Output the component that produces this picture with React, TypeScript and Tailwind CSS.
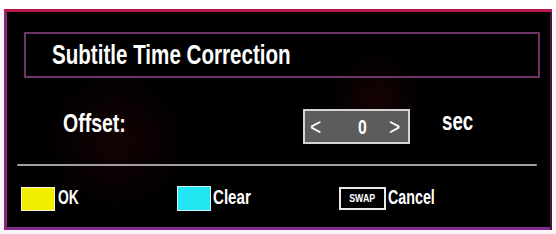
import React from "react";

const F = { fontFamily: '"Liberation Sans", Arial, sans-serif' };

function T({ children, cls }: { children: React.ReactNode; cls: string }) {
  return (
    <span className={`inline-block whitespace-nowrap font-bold text-white origin-left leading-none ${cls}`} style={F}>
      {children}
    </span>
  );
}

export default function App() {
  return (
    <div className="w-[556px] h-[234px] bg-[#fbf4fb] overflow-hidden" style={F}>
      <div className="h-[9px] bg-white" />
      <div className="ml-[4px] w-[548px] h-[221px] flex flex-col pt-[3px] pl-[3px] pr-[2px] pb-[3px] bg-black shadow-[inset_0_3px_0_#b81a4e,inset_3px_0_0_#86286e,inset_-2px_0_0_#4a1240,inset_0_-3px_0_#7d2c8c]">
        <div className="flex-1 flex flex-col bg-[radial-gradient(circle_at_20%_60%,#140204_0%,transparent_16%),radial-gradient(circle_at_68%_40%,#160204_0%,transparent_12%)]">
          <div className="mt-[20px] ml-[17px] w-[516px] h-[46px] border-2 border-[#6e3466] flex items-center pl-[26px]">
            <T cls="text-[28px] scale-x-[0.735]">Subtitle Time Correction</T>
          </div>
          <div className="mt-[31px] h-[35px] flex items-center">
            <div className="w-[296px] pl-[56px]">
              <T cls="text-[25px] scale-x-[0.78] translate-y-[-2px]">Offset:</T>
            </div>
            <div className="w-[107px] h-[35px] border-2 border-[#d4d4d4] bg-[#5c5c5c] flex items-center justify-between px-[5px]">
              <T cls="text-[24px] font-normal scale-x-[0.8]">&lt;</T>
              <T cls="text-[21px] scale-x-[0.75] ml-[14px]">0</T>
              <T cls="text-[24px] font-normal scale-x-[0.8]">&gt;</T>
            </div>
            <div className="ml-[32px]">
              <T cls="text-[26px] scale-x-[0.72] translate-y-[-4px]">sec</T>
            </div>
          </div>
          <div className="mt-[20px] ml-[10px] w-[520px] h-[2px] rounded-full bg-[#a0a0a0]" />
          <div className="mt-[20px] h-[25px] flex items-center">
            <div className="ml-[14px] w-[34px] h-[24px] bg-[#f2ee00] border border-[#f4f4d0]" />
            <div className="ml-[3px] w-[116px]">
              <T cls="text-[21px] scale-x-[0.66]">OK</T>
            </div>
            <div className="ml-[3px] w-[34px] h-[25px] bg-[#22e6f2] border border-[#d0f4f8]" />
            <div className="ml-[2px] w-[126px]">
              <T cls="text-[21px] scale-x-[0.72]">Clear</T>
            </div>
            <div className="w-[47px] h-[23px] border-2 border-[#e8e8e8] bg-black flex items-center justify-center">
              <span className="inline-block text-[11px] font-bold text-white leading-none scale-x-[0.8]" style={F}>SWAP</span>
            </div>
            <div className="ml-[2px]">
              <T cls="text-[21px] scale-x-[0.68]">Cancel</T>
            </div>
          </div>
        </div>
      </div>
    </div>
  );
}
